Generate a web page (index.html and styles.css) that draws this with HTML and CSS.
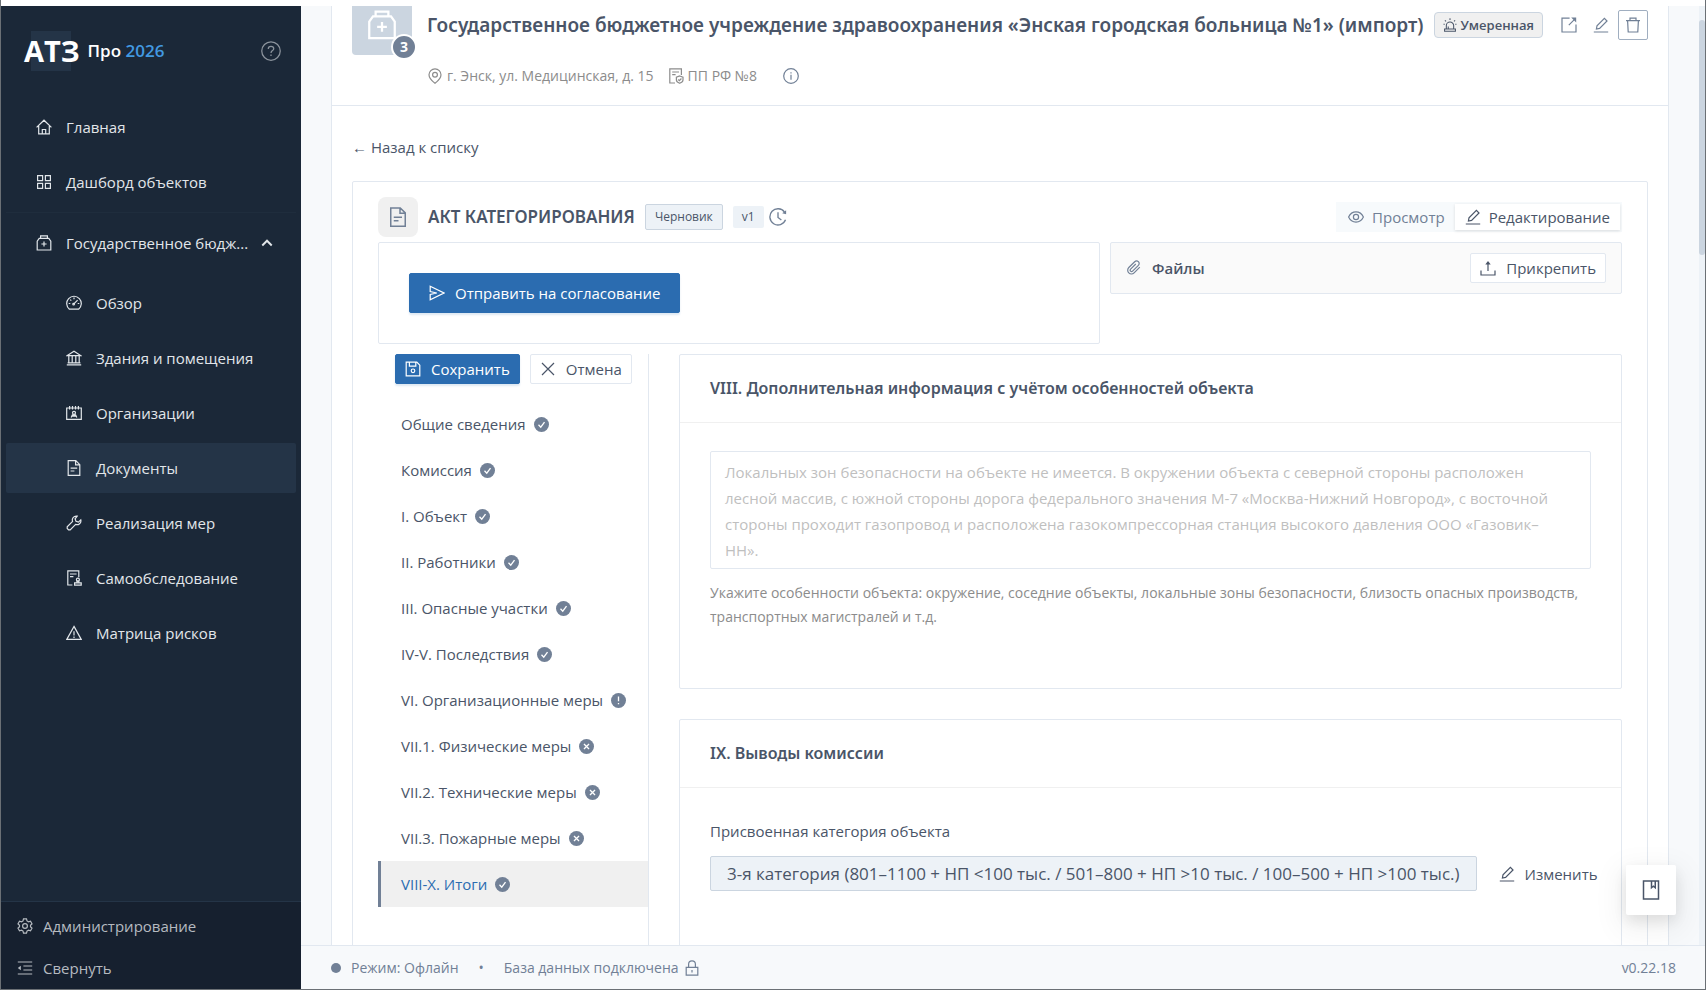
FILE: index.html
```
<!DOCTYPE html>
<html lang="ru">

<head>
  <meta charset="UTF-8" />
  <meta name="viewport" content="width=device-width, initial-scale=1.0" />
  <title>АТЗ Про 2026</title>
  <link rel="stylesheet" href="styles.css">
</head>

<body>

  <!-- Icon sprite -->
  <svg class="sprite" aria-hidden="true">
    <symbol id="i-home" viewBox="0 0 16 16"><path d="M.6 8.4 8 1.2l7.4 7.2M2.7 7v7.9h10.6V7M6.3 14.9v-4.4h3.4v4.4" /></symbol>
    <symbol id="i-grid" viewBox="0 0 16 16"><path d="M1.6 1.6h5v5h-5zM9.4 1.6h5v5h-5zM1.6 9.4h5v5h-5zM9.4 9.4h5v5h-5z" /></symbol>
    <symbol id="i-med" viewBox="0 0 16 16"><path d="M4.6 3.4V.9h6.8v2.5M1.2 15V6.2l2-2.8h9.6l2 2.8V15zM8 6.4v5.2M5.4 9h5.2" /></symbol>
    <symbol id="i-dash" viewBox="0 0 16 16"><path d="M3.4 14.2a7.3 7.3 0 1 1 9.2 0zM8 2.6v1.6M2.7 8.5h1.6M11.7 8.5h1.6M4.2 4.6l1.1 1.1M7.6 9.2l4-4" /><circle cx="7.6" cy="9.2" r=".8" /></symbol>
    <symbol id="i-bank" viewBox="0 0 16 16"><path d="M1.3 5.6 8 1.2l6.7 4.4zM.8 14.8h14.4M1.6 12.8h12.8M2.8 6v6.6M6.2 6v6.6M9.8 6v6.6M13.2 6v6.6" /></symbol>
    <symbol id="i-org" viewBox="0 0 16 16"><path d="M.7 3h14.6v11.400H.7zM3.6 1v3.400M6.500 1v3.400M9.500 1v3.400M12.400 1v3.400M5.200 12.400 6.400 9.800h3.200l1.200 2.600M5.800 11.200h4.400" /><circle cx="8" cy="7.800" r="1.500" /></symbol>
    <symbol id="i-doc" viewBox="0 0 16 16"><path d="M9.8.7H2.2v14.6h11.6V4.7zM9.6.9v4h4M4.6 8.2h6.6M4.6 11h3.8" /></symbol>
    <symbol id="i-tool" viewBox="0 0 16 16"><path d="M11.2 1.2a3.9 3.9 0 0 0-4.6 5.2L1.2 11.8v1.6l1.4 1.4h1.6l5.4-5.4a3.9 3.9 0 0 0 5.2-4.6l-2.4 2.3-2.4-.9-.9-2.4z" /></symbol>
    <symbol id="i-audit" viewBox="0 0 16 16"><path d="M6.4 15H1.8V.8h11v6.4M4 4h6.6M4 6.6h3.4M8.6 15.2h6.6v-2.4H8.6zM11 12.6v-1.4h1.8v1.4" /><circle cx="11.9" cy="9.7" r="1.5" /></symbol>
    <symbol id="i-warn" viewBox="0 0 16 16"><path d="M8 1.4 15.2 14.4H.8zM8 6.2v4.2M8 11.6v1.4" /></symbol>
    <symbol id="i-gear" viewBox="0 0 16 16"><path d="M6.5.9h3l.5 2 1.5.9 2-.6 1.5 2.6-1.5 1.4v1.6l1.5 1.4-1.5 2.6-2-.6-1.5.9-.5 2h-3l-.5-2-1.5-.9-2 .6L1 10.2l1.5-1.4V7.2L1 5.8l1.500-2.600 2 .6L6 2.900z" /><circle cx="8" cy="8" r="2.4" /></symbol>
    <symbol id="i-fold" viewBox="0 0 16 16"><path d="M.8 2h14.4M6.4 6h8.8M6.4 10h8.8M.8 14h14.4" /><path class="solid" d="M.8 8 3.8 5.7v4.6z" /></symbol>
    <symbol id="i-up" viewBox="0 0 16 16"><path d="M2.6 10.8 8 5.4l5.4 5.4" /></symbol>
    <symbol id="i-help" viewBox="0 0 16 16"><circle cx="8" cy="8" r="7.4" /><path d="M5.8 6.3C5.8 4.9 6.8 4.2 8 4.2s2.2.8 2.2 2C10.2 7.7 8 7.7 8 9.5M8 10.8v1.2" /></symbol>
    <symbol id="i-pin" viewBox="0 0 16 16"><path d="M8 15.3C4.8 12.9 2 10.2 2 6.8a6 6 0 0 1 12 0c0 3.4-2.8 6.1-6 8.5z" /><circle cx="8" cy="6.8" r="2.4" /></symbol>
    <symbol id="i-protect" viewBox="0 0 16 16"><path d="M7 15H1.8V.8h11.6V7M4.2 4H11M4.2 6.6h3.4M11.7 8l3.3 1.2v2.9c0 1.5-1.6 2.6-3.3 3.2-1.7-.6-3.3-1.7-3.3-3.2V9.2zM10.2 11.5l1.2 1.2 2-2.2" /></symbol>
    <symbol id="i-info" viewBox="0 0 16 16"><circle cx="8" cy="8" r="7.3" /><path d="M8 6.8v5M8 4.2v1.4" /></symbol>
    <symbol id="i-alert" viewBox="0 0 16 16"><path d="M3.8 12.4V8.8a4.2 4.2 0 0 1 8.4 0v3.6M1.8 12.6h12.4v2.6H1.8zM8 .4v1.8M2.2 2.7l1.2 1.2M13.8 2.7l-1.2 1.2M.6 7.2H2M14 7.2h1.4M6 12V9.6" /></symbol>
    <symbol id="i-export" viewBox="0 0 16 16"><path d="M8.6 1.2H1V15h14V7.6M7.8 8.2l6-6" /><path class="solid" d="M15.200.6v5L10.200.6z" /></symbol>
    <symbol id="i-edit" viewBox="0 0 16 16"><path d="M.8 15h14.4M3.4 12l.6-3.2 7.4-7.4L14 4l-7.4 7.4z" /></symbol>
    <symbol id="i-trash" viewBox="0 0 16 16"><path d="M1 3.6h14M5 3.4V1.2h6v2.2M2.6 3.8 3.200 15h9.600l.6-11.200" /></symbol>
    <symbol id="i-eye" viewBox="0 0 16 16"><path d="M.6 8C2.2 4.6 4.7 2.9 8 2.9S13.8 4.6 15.4 8c-1.6 3.4-4.1 5.1-7.4 5.1S2.2 11.4.6 8z" /><circle cx="8" cy="8" r="2.6" /></symbol>
    <symbol id="i-clip" viewBox="0 0 16 16"><path d="M13.8 7.1 8.1 12.8a3.7 3.7 0 0 1-5.3-5.3L8.7 1.7a2.6 2.6 0 0 1 3.7 3.7l-5.8 5.8a1.4 1.4 0 0 1-2-2l5.2-5.2" /></symbol>
    <symbol id="i-upload" viewBox="0 0 16 16"><path d="M1 10.4V15h14v-4.6M8 11V2.2" /><path class="solid" d="M8 1l2.7 3.5H5.3z" /></symbol>
    <symbol id="i-send" viewBox="0 0 16 16"><path d="M1.200 1.200 15 8 1.200 14.800V9.400L7.800 8 1.200 6.600z" /></symbol>
    <symbol id="i-save" viewBox="0 0 16 16"><path d="M1.2 1.2h10.6l3 3v10.6H1.2zM4.4 1.4v3.8h6.4V1.4" /><circle cx="8" cy="9.8" r="1.8" /></symbol>
    <symbol id="i-close" viewBox="0 0 16 16"><path d="M2 2l12 12M14 2 2 14" /></symbol>
    <symbol id="i-history" viewBox="0 0 16 16"><path d="M14.7 10.5A7.2 7.2 0 1 1 13.8 3.6M8 3.8v4.6l3 2.3" /><path class="solid" d="M15.2 2v3.6l-3.5-1z" /></symbol>
    <symbol id="i-lock" viewBox="0 0 16 16"><path d="M2.2 7.4h11.6v7.8H2.2zM4.6 7.2V4.3a3.4 3.4 0 0 1 6.8 0v2.9M8 10v2.6" /></symbol>
    <symbol id="i-book" viewBox="0 0 16 16"><path d="M2 .8h12v14.4H2zM8.4 1v5.2L9.9 5l1.5 1.2V1" /></symbol>
    <symbol id="i-ok" viewBox="0 0 16 16"><circle class="solid" cx="8" cy="8" r="8" /><path class="mark" d="M4.8 8.2 7.2 10.8 11.2 5.4" /></symbol>
    <symbol id="i-bad" viewBox="0 0 16 16"><circle class="solid" cx="8" cy="8" r="8" /><path class="mark" d="M5.3 5.3l5.4 5.4M10.7 5.3l-5.4 5.4" /></symbol>
    <symbol id="i-excl" viewBox="0 0 16 16"><circle class="solid" cx="8" cy="8" r="8" /><path class="mark" d="M8 3.8v5M8 10.6v1.5" /></symbol>
  </svg>

  <div class="app">

    <aside class="sidebar">
      <div class="brand">
        <span class="logo">АТЗ</span>
        <span class="brand-name">Про <b>2026</b></span>
        <button class="help" aria-label="Помощь"><svg class="icon"><use href="#i-help" /></svg></button>
      </div>

      <nav class="menu">
        <a href="#" class="menu-item"><svg class="icon"><use href="#i-home" /></svg>Главная</a>
        <a href="#" class="menu-item"><svg class="icon"><use href="#i-grid" /></svg>Дашборд объектов</a>
        <div class="menu-line"></div>
        <a href="#" class="menu-item group"><svg class="icon"><use href="#i-med" /></svg>Государственное бюдж...<svg class="icon arrow"><use href="#i-up" /></svg></a>
        <div class="submenu">
          <a href="#" class="menu-item"><svg class="icon"><use href="#i-dash" /></svg>Обзор</a>
          <a href="#" class="menu-item"><svg class="icon"><use href="#i-bank" /></svg>Здания и помещения</a>
          <a href="#" class="menu-item"><svg class="icon"><use href="#i-org" /></svg>Организации</a>
          <a href="#" class="menu-item active"><svg class="icon"><use href="#i-doc" /></svg>Документы</a>
          <a href="#" class="menu-item"><svg class="icon"><use href="#i-tool" /></svg>Реализация мер</a>
          <a href="#" class="menu-item"><svg class="icon"><use href="#i-audit" /></svg>Самообследование</a>
          <a href="#" class="menu-item"><svg class="icon"><use href="#i-warn" /></svg>Матрица рисков</a>
        </div>
      </nav>

      <div class="sidebar-footer">
        <a href="#"><svg class="icon"><use href="#i-gear" /></svg>Администрирование</a>
        <a href="#"><svg class="icon"><use href="#i-fold" /></svg>Свернуть</a>
      </div>
    </aside>

    <div class="main">
      <div class="scroll">
        <main class="page">

          <header class="object">
            <div class="avatar">
              <svg class="icon"><use href="#i-med" /></svg>
              <span class="avatar-badge">3</span>
            </div>
            <div class="object-info">
              <div class="object-top">
                <h1>Государственное бюджетное учреждение здравоохранения «Энская городская больница №1» (импорт)</h1>
                <span class="threat"><svg class="icon"><use href="#i-alert" /></svg>Умеренная</span>
                <div class="object-actions">
                  <button aria-label="Экспорт"><svg class="icon"><use href="#i-export" /></svg></button>
                  <button aria-label="Изменить"><svg class="icon"><use href="#i-edit" /></svg></button>
                  <button class="outlined" aria-label="Удалить"><svg class="icon"><use href="#i-trash" /></svg></button>
                </div>
              </div>
              <div class="object-meta">
                <span><svg class="icon"><use href="#i-pin" /></svg>г. Энск, ул. Медицинская, д. 15</span>
                <span><svg class="icon"><use href="#i-protect" /></svg>ПП РФ №8</span>
                <button class="info" aria-label="Сведения"><svg class="icon"><use href="#i-info" /></svg></button>
              </div>
            </div>
          </header>

          <a href="#" class="back">← Назад к списку</a>

          <section class="act">
            <div class="act-head">
              <span class="act-icon"><svg class="icon"><use href="#i-doc" /></svg></span>
              <h2>АКТ КАТЕГОРИРОВАНИЯ</h2>
              <span class="tag">Черновик</span>
              <span class="version">v1</span>
              <button class="history" aria-label="История"><svg class="icon"><use href="#i-history" /></svg></button>
              <div class="switch">
                <button><svg class="icon"><use href="#i-eye" /></svg>Просмотр</button>
                <button class="selected"><svg class="icon"><use href="#i-edit" /></svg>Редактирование</button>
              </div>
            </div>

            <div class="act-row">
              <div class="send-box">
                <button class="btn btn-primary btn-large"><svg class="icon"><use href="#i-send" /></svg>Отправить на согласование</button>
              </div>
              <div class="files-box">
                <svg class="icon"><use href="#i-clip" /></svg>
                <strong>Файлы</strong>
                <button class="btn"><svg class="icon"><use href="#i-upload" /></svg>Прикрепить</button>
              </div>
            </div>

            <div class="act-body">
              <div class="steps">
                <div class="steps-actions">
                  <button class="btn btn-primary"><svg class="icon"><use href="#i-save" /></svg>Сохранить</button>
                  <button class="btn"><svg class="icon"><use href="#i-close" /></svg>Отмена</button>
                </div>
                <nav>
                  <a href="#">Общие сведения<svg class="icon"><use href="#i-ok" /></svg></a>
                  <a href="#">Комиссия<svg class="icon"><use href="#i-ok" /></svg></a>
                  <a href="#">I. Объект<svg class="icon"><use href="#i-ok" /></svg></a>
                  <a href="#">II. Работники<svg class="icon"><use href="#i-ok" /></svg></a>
                  <a href="#">III. Опасные участки<svg class="icon"><use href="#i-ok" /></svg></a>
                  <a href="#">IV-V. Последствия<svg class="icon"><use href="#i-ok" /></svg></a>
                  <a href="#">VI. Организационные меры<svg class="icon"><use href="#i-excl" /></svg></a>
                  <a href="#">VII.1. Физические меры<svg class="icon"><use href="#i-bad" /></svg></a>
                  <a href="#">VII.2. Технические меры<svg class="icon"><use href="#i-bad" /></svg></a>
                  <a href="#">VII.3. Пожарные меры<svg class="icon"><use href="#i-bad" /></svg></a>
                  <a href="#" class="current">VIII-X. Итоги<svg class="icon"><use href="#i-ok" /></svg></a>
                </nav>
              </div>

              <div class="forms">
                <section class="card">
                  <h3>VIII. Дополнительная информация с учётом особенностей объекта</h3>
                  <div class="card-body">
                    <textarea rows="4" aria-label="Дополнительная информация" aria-describedby="extra-hint" placeholder="Локальных зон безопасности на объекте не имеется. В окружении объекта с северной стороны расположен лесной массив, с южной стороны дорога федерального значения М-7 «Москва-Нижний Новгород», с восточной стороны проходит газопровод и расположена газокомпрессорная станция высокого давления ООО «Газовик–НН»."></textarea>
                    <p id="extra-hint" class="hint">Укажите особенности объекта: окружение, соседние объекты, локальные зоны безопасности, близость опасных производств, транспортных магистралей и т.д.</p>
                  </div>
                </section>

                <section class="card">
                  <h3>IX. Выводы комиссии</h3>
                  <div class="card-body">
                    <div class="field-name">Присвоенная категория объекта</div>
                    <div class="category">
                      <span class="category-tag">3-я категория (801–1100 + НП &lt;100 тыс. / 501–800 + НП &gt;10 тыс. / 100–500 + НП &gt;100 тыс.)</span>
                      <button class="change"><svg class="icon"><use href="#i-edit" /></svg>Изменить</button>
                    </div>
                  </div>
                </section>
              </div>
            </div>
          </section>

        </main>
        <div class="track"><div class="thumb"></div></div>
      </div>

      <footer class="status">
        <span class="dot"></span>
        <span>Режим: Офлайн</span>
        <span class="sep">•</span>
        <span>База данных подключена</span>
        <svg class="icon"><use href="#i-lock" /></svg>
        <span class="ver">v0.22.18</span>
      </footer>
    </div>
  </div>

  <button class="float-btn" aria-label="Справочник"><svg class="icon"><use href="#i-book" /></svg></button>

</body>

</html>
```
FILE: styles.css
```
* {
  margin: 0;
  padding: 0;
  box-sizing: border-box;
}

body {
  font-family: 'Segoe UI', 'Open Sans', 'Noto Sans', sans-serif;
  font-size: 15px;
  line-height: 24px;
  color: #4a5568;
  background: #fff;
}

a {
  color: inherit;
  text-decoration: none;
}

button {
  font: inherit;
  color: inherit;
  background: none;
  border: none;
  cursor: pointer;
}

h1,
h2,
h3 {
  font-family: 'Segoe UI', 'Noto Sans', 'Open Sans', sans-serif;
  font-weight: 600;
}

.sprite {
  display: none;
}

.icon {
  width: 16px;
  height: 16px;
  flex: none;
  fill: none;
  stroke: currentColor;
  stroke-width: 1.2;
}

.solid {
  fill: currentColor;
  stroke: none;
}

.mark {
  stroke: #fff;
  stroke-width: 1.4;
}

.app {
  display: flex;
  height: 100vh;
  padding-top: 6px;
  border: 1px solid #6b7075;
  border-top: none;
}

/* Sidebar */
.sidebar {
  width: 300px;
  flex: none;
  display: flex;
  flex-direction: column;
  background: #1b2838;
  color: #e2e6ea;
}

.brand {
  display: flex;
  align-items: center;
  height: 90px;
  padding: 0 20px 0 23px;
}

.logo {
  font-size: 29px;
  font-weight: 700;
  line-height: 40px;
  color: #fff;
  background: linear-gradient(#243447, #243447) 7px 0 / 40px 40px no-repeat;
}

.brand-name {
  margin-left: 8px;
  font-size: 17px;
  font-weight: 600;
  color: #fff;
}

.brand-name b {
  font-weight: 600;
  color: #4299e1;
}

.help {
  margin-left: auto;
  display: flex;
  color: #8c949d;
}

.help .icon {
  width: 20px;
  height: 20px;
  stroke-width: 1;
}

.menu {
  flex: 1;
  padding: 6px 5px;
}

.menu-item {
  display: flex;
  align-items: center;
  gap: 14px;
  height: 50px;
  margin-bottom: 5px;
  padding: 0 22px 0 30px;
  border-radius: 2px;
  white-space: nowrap;
}

.menu-item.group {
  margin-bottom: 10px;
}

.menu-item.active {
  background: #243447;
}

.menu-line {
  height: 1px;
  margin-bottom: 5px;
  background: #1f2d3d;
}

.menu-item .arrow {
  width: 14px;
  height: 14px;
  margin-left: auto;
  stroke-width: 2.2;
}

.menu-item.group {
  gap: 0;
}

.menu-item.group .icon:first-child {
  margin-right: 14px;
}

.submenu .menu-item {
  padding-left: 60px;
}

.sidebar-footer {
  padding-top: 3px;
  background: #16202f;
  border-top: 1px solid #243447;
  color: #b5bac0;
}

.sidebar-footer a {
  display: flex;
  align-items: center;
  gap: 10px;
  height: 42px;
  padding: 0 16px;
}

/* Main area */
.main {
  flex: 1;
  min-width: 0;
  display: flex;
  flex-direction: column;
  background: #f7f9fb;
}

.scroll {
  flex: 1;
  min-height: 0;
  display: flex;
  overflow: hidden;
}

.page {
  flex: 1;
  min-width: 0;
  margin: 0 30px;
  background: #fff;
  border: solid #e2e8f0;
  border-width: 0 1px;
}

.track {
  width: 6px;
  background: #edf2f7;
}

.thumb {
  height: 25%;
  margin-top: 14px;
  border-radius: 3px;
  background: #cbd5e0;
}

.object {
  display: flex;
  gap: 15px;
  height: 100px;
  padding: 0 20px;
  border-bottom: 1px solid #e2e8f0;
}

.avatar {
  position: relative;
  width: 60px;
  height: 49px;
  flex: none;
  padding: 4px 15px;
  border-radius: 0 0 4px 4px;
  background: #cbd5e0;
  color: #fff;
}

.avatar .icon {
  width: 30px;
  height: 30px;
}

.avatar-badge {
  position: absolute;
  right: -5px;
  bottom: -5px;
  width: 26px;
  height: 26px;
  border: 2px solid #fff;
  border-radius: 50%;
  background: #718096;
  font-size: 14px;
  font-weight: 700;
  line-height: 22px;
  text-align: center;
}

.object-info {
  flex: 1;
  min-width: 0;
  padding-top: 4px;
}

.object-top {
  display: flex;
  align-items: center;
  height: 30px;
}

h1 {
  font-size: 19px;
  line-height: 30px;
  white-space: nowrap;
}

.threat {
  display: flex;
  align-items: center;
  gap: 4px;
  height: 26px;
  margin-left: 10px;
  padding: 0 8px;
  border: 1px solid #cbd5e0;
  border-radius: 4px;
  background: #f0f0f0;
  font-size: 13px;
  font-weight: 600;
}

.threat .icon {
  width: 14px;
  height: 14px;
}

.object-actions {
  display: flex;
  gap: 2px;
  margin-left: auto;
  color: #718096;
}

.object-actions button {
  display: grid;
  place-items: center;
  width: 30px;
  height: 30px;
  border-radius: 2px;
}

.object-actions .outlined {
  border: 1px solid #a0aec0;
}

.object-meta {
  display: flex;
  align-items: center;
  gap: 14px;
  margin-top: 24px;
  font-size: 14px;
  color: #8c8c8c;
}

.object-meta span {
  display: flex;
  align-items: center;
  gap: 4px;
}

.info {
  display: flex;
  margin-left: 12px;
  color: #718096;
}

.back {
  display: block;
  padding: 29px 20px 22px;
}

.act {
  margin: 0 20px;
  padding: 15px 25px 0;
  border: 1px solid #e2e8f0;
  border-radius: 2px 2px 0 0;
}

.act-head {
  display: flex;
  align-items: center;
  height: 40px;
  margin-bottom: 5px;
}

.act-icon {
  display: grid;
  place-items: center;
  width: 40px;
  height: 40px;
  border-radius: 8px;
  background: #f0f0f0;
  color: #718096;
}

.act-icon .icon {
  width: 20px;
  height: 20px;
}

h2 {
  margin: 0 10px;
  font-size: 17px;
}

.tag {
  padding: 0 9px;
  border: 1px solid #cbd5e0;
  border-radius: 2px;
  background: #edf2f7;
  font-size: 12px;
}

.version {
  margin-left: 10px;
  padding: 0 9px;
  border-radius: 2px;
  background: #edf2f7;
  font-size: 12px;
  line-height: 22px;
}

.history {
  display: flex;
  margin-left: 5px;
  color: #718096;
}

.history .icon {
  width: 18px;
  height: 18px;
}

.switch {
  display: flex;
  margin-left: auto;
  padding: 2px;
  background: #f7fafc;
}

.switch button {
  display: flex;
  align-items: center;
  gap: 8px;
  height: 26px;
  padding: 0 10px;
  color: #718096;
}

.switch .selected {
  background: #fff;
  color: #4a5568;
  box-shadow: 0 1px 3px rgba(0, 0, 0, 0.12);
}

.act-row {
  display: grid;
  grid-template-columns: 722fr 512fr;
  align-items: start;
  gap: 10px;
  margin-bottom: 10px;
}

.send-box {
  padding: 30px;
  border: 1px solid #e2e8f0;
  border-radius: 2px;
}

.files-box {
  display: flex;
  align-items: center;
  gap: 10px;
  padding: 10px 15px;
  border: 1px solid #e2e8f0;
  border-radius: 2px;
  background: #fafafa;
}

.files-box > .icon {
  color: #718096;
}

.files-box strong {
  font-weight: 600;
}

.files-box .btn {
  margin-left: auto;
}

.btn {
  display: flex;
  align-items: center;
  gap: 10px;
  height: 30px;
  padding: 0 9px;
  border: 1px solid #e2e8f0;
  border-radius: 2px;
  background: #fff;
}

.btn-primary {
  border-color: #2b6cb0;
  background: #2b6cb0;
  color: #fff;
  box-shadow: 0 2px 2px rgba(43, 108, 176, 0.15);
}

.btn-large {
  height: 40px;
  padding: 0 19px;
}

.act-body {
  display: flex;
  gap: 30px;
}

.steps {
  width: 271px;
  flex: none;
  border-right: 1px solid #e2e8f0;
}

.steps-actions {
  display: flex;
  gap: 10px;
  padding: 0 17px 17px;
}

.steps nav a {
  display: flex;
  align-items: center;
  gap: 8px;
  height: 46px;
  padding-left: 20px;
  border-left: 3px solid transparent;
  white-space: nowrap;
}

.steps nav .icon {
  width: 15px;
  height: 15px;
  color: #718096;
}

.steps nav .current {
  border-left-color: #718096;
  background: #f0f0f0;
  color: #2b6cb0;
  font-weight: 500;
}

.forms {
  flex: 1;
  min-width: 0;
}

.card {
  min-height: 335px;
  margin-bottom: 30px;
  border: 1px solid #e2e8f0;
  border-radius: 2px;
}

h3 {
  padding: 21px 30px;
  border-bottom: 1px solid #f0f0f0;
  font-size: 16px;
  line-height: 25px;
}

.card-body {
  padding: 28px 30px;
}

textarea {
  display: block;
  width: 100%;
  height: 118px;
  padding: 7px 20px 7px 14px;
  border: 1px solid #e2e8f0;
  border-radius: 2px;
  font: inherit;
  line-height: 26px;
  color: inherit;
  resize: none;
  overflow: hidden;
}

textarea::placeholder {
  color: #bfbfbf;
}

.hint {
  margin-top: 12px;
  font-size: 14px;
  color: #8c8c8c;
}

.field-name {
  margin-top: 3px;
}

.category {
  display: flex;
  align-items: center;
  gap: 22px;
  margin-top: 13px;
}

.category-tag {
  padding: 0 16px;
  border: 1px solid #cbd5e0;
  border-radius: 2px;
  background: #edf2f7;
  font-size: 17px;
  line-height: 33px;
  white-space: nowrap;
}

.change {
  display: flex;
  align-items: center;
  gap: 10px;
}

/* Status bar */
.status {
  display: flex;
  align-items: center;
  height: 44px;
  flex: none;
  padding: 0 29px 0 30px;
  border-top: 1px solid #e2e8f0;
  background: #f7f9fb;
  font-size: 14px;
  color: #718096;
}

.dot {
  width: 10px;
  height: 10px;
  margin-right: 10px;
  border-radius: 50%;
  background: #718096;
}

.sep {
  margin: 0 20px;
}

.status .icon {
  margin-left: 5px;
}

.ver {
  margin-left: auto;
}

.float-btn {
  position: fixed;
  right: 30px;
  bottom: 75px;
  display: grid;
  place-items: center;
  width: 50px;
  height: 50px;
  border-radius: 2px;
  background: #fff;
  box-shadow: 0 6px 16px rgba(0, 0, 0, 0.1), 0 9px 28px 8px rgba(0, 0, 0, 0.05);
}

.float-btn .icon {
  width: 20px;
  height: 20px;
}
```
